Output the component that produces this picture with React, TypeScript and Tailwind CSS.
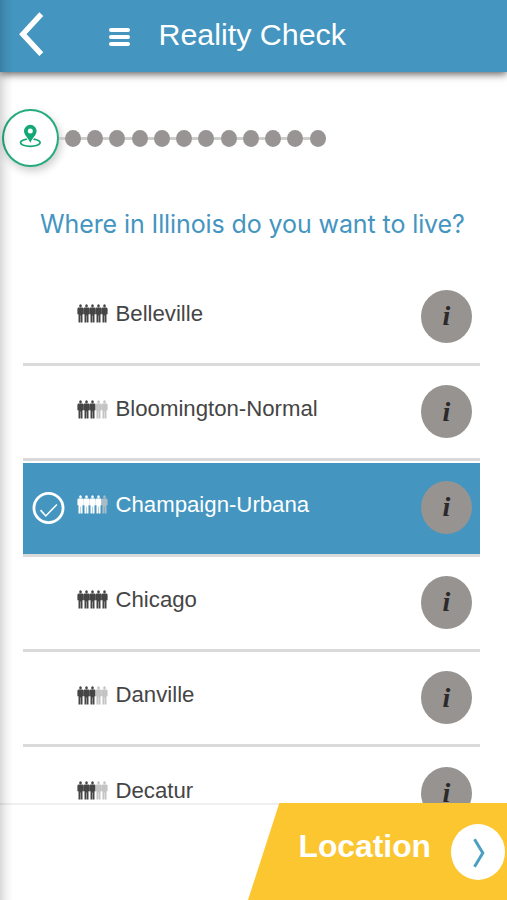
import React from 'react';
import clsx from 'clsx';

interface City {
  name: string;
  population: number;
  selected?: boolean;
}

const cities: City[] = [
  { name: 'Belleville', population: 5 },
  { name: 'Bloomington-Normal', population: 3 },
  { name: 'Champaign-Urbana', population: 4, selected: true },
  { name: 'Chicago', population: 5 },
  { name: 'Danville', population: 3 },
  { name: 'Decatur', population: 3 },
];

const REMAINING_STEPS = 12;

const Person: React.FC<{ className: string }> = ({ className }) => (
  <svg viewBox="0 0 7 19" className={clsx('h-[19px] w-[7px] -mr-[0.9px] shrink-0', className)} fill="currentColor">
    <ellipse cx="3.5" cy="1.8" rx="1.3" ry="1.6" />
    <path d="M1.7 3.6h3.6q1.2 0 1.300 1.300v5.300H5.500V18.500H3.700V11.400H3.300V18.500H1.500V10.200H.4V4.900Q.5 3.600 1.700 3.600z" />
  </svg>
);

const Population: React.FC<{ count: number; selected?: boolean }> = ({ count, selected }) => (
  <div className="-mt-[7px] flex w-[38.5px] shrink-0">
    {[1, 2, 3, 4, 5].map((n) => (
      <Person
        key={n}
        className={
          n <= count ? (selected ? 'text-white' : 'text-[#454545]') : selected ? 'text-[#a9bcc7]' : 'text-[#c4c4c4]'
        }
      />
    ))}
  </div>
);

const Header: React.FC = () => (
  <header className="relative z-10 flex h-[71.5px] shrink-0 items-center bg-[#4495bf] text-white shadow-[0_2px_8px_rgba(0,0,0,0.65)]">
    <button className="ml-[19px] mt-[-3px]">
      <svg viewBox="0 0 26 44" className="h-11 w-[26px]" fill="none" stroke="currentColor" strokeWidth="5.4">
        <path d="M22.3 2.2L3.8 22.2L22.3 42.2" />
      </svg>
    </button>
    <button className="ml-16 mt-[2px] flex w-[21px] flex-col gap-[3.4px]">
      <span className="h-[3.6px] rounded-full bg-white" />
      <span className="h-[3.6px] rounded-full bg-white" />
      <span className="h-[3.6px] rounded-full bg-white" />
    </button>
    <h1 className="ml-[28.5px] mt-[-3px] text-[30.4px] leading-none">Reality Check</h1>
  </header>
);

const Progress: React.FC = () => (
  <div className="mt-[37.5px] flex h-[58px] items-center pl-[2px]">
    <div className="flex h-[58px] w-[56.5px] shrink-0 items-center justify-center rounded-[50%] border-2 border-[#25ab7c] bg-white shadow-[2px_4px_8px_rgba(0,0,0,0.2)]">
      <svg viewBox="0 0 24 24" className="-mt-[5px] h-6 w-6 text-[#14a874]" fill="none">
        <ellipse cx="12.3" cy="18.6" rx="9.8" ry="3.7" stroke="currentColor" strokeWidth="1.7" />
        <path d="M12.3 18L7.3 11H17.3z" fill="#fff" stroke="#fff" strokeWidth="2" />
        <path
          d="M12.3 .8a6.3 6.3 0 0 0-6.3 6.3c0 4.300 4.700 7.200 6.300 12 1.600-4.800 6.300-7.700 6.300-12a6.300 6.300 0 0 0-6.300-6.300z"
          fill="currentColor"
        />
        <circle cx="12.3" cy="7" r="2.5" fill="#fff" />
      </svg>
    </div>
    {Array.from({ length: REMAINING_STEPS }, (_, i) => (
      <React.Fragment key={i}>
        <span className="mt-px h-[2.5px] w-[6.27px] shrink-0 bg-[#cfcdcc]" />
        <span className="mt-px h-[16.5px] w-4 shrink-0 rounded-[50%] bg-[#979493]" />
      </React.Fragment>
    ))}
  </div>
);

const CityRow: React.FC<{ city: City }> = ({ city }) => (
  <li className="h-[95.35px] shrink-0 border-b-[3px] border-[#dbdada] pt-[1.5px]">
    <div
      className={clsx('flex h-full items-center', city.selected ? 'bg-[#4495bf] text-white' : 'text-[#454545]')}
    >
      <div className="w-[54px] shrink-0 pl-[9px]">
        {city.selected && (
          <svg viewBox="0 0 34 34" className="h-[34px] w-[33px]" fill="none" stroke="currentColor">
            <circle cx="17" cy="17" r="15" strokeWidth="2.9" />
            <path d="M8.8 19.2L14.2 25.2L25.600 13.400" strokeWidth="1.6" />
          </svg>
        )}
      </div>
      <Population count={city.population} selected={city.selected} />
      <span className="-mt-[7px] flex-1 text-[22.2px] leading-none">{city.name}</span>
      <button className="mr-2 -mt-[2px] flex h-[53px] w-[51px] items-center justify-center rounded-[50%] bg-[#979391] font-['Liberation_Serif',serif] text-[28px] font-bold italic leading-none text-[#2b2929]">
        i
      </button>
    </div>
  </li>
);

const Footer: React.FC = () => (
  <footer className="z-10 flex h-[97.500px] shrink-0 justify-end border-t-2 border-[#efefef] bg-white">
    <div className="-mt-[2px] flex h-[97.500px] w-[259px] items-center bg-[#fbc62f] pl-[50.500px] text-white [clip-path:polygon(31.500px_0,100%_0,100%_100%,0_100%)]">
      <span className="-mt-[9px] w-[152.500px] text-[31.8px] font-bold leading-none">Location</span>
      <button className="mt-[2px] flex h-14 w-[54px] shrink-0 items-center justify-center rounded-[50%] bg-white">
        <svg viewBox="0 0 12 30" className="ml-[2px] mt-px h-[30px] w-3" fill="none" stroke="#4a9fc2" strokeWidth="3">
          <path d="M1.500 1.200L9.800 15L1.500 28.800" />
        </svg>
      </button>
    </div>
  </footer>
);

export default function App() {
  return (
    <div className="relative flex h-[900px] w-[507px] flex-col overflow-hidden bg-white font-['Liberation_Sans',Arial,sans-serif]">
      <Header />
      <main className="flex min-h-0 flex-1 flex-col overflow-hidden">
        <Progress />
        <h2 className="mt-[41px] h-[62.500px] shrink-0 whitespace-nowrap pl-10 font-['Inter',sans-serif] text-[25px] leading-[32px] tracking-[-0.1px] text-[#4495bf]">
          Where in Illinois do you want to live?
        </h2>
        <ul className="ml-[23px] flex w-[457px] flex-col">
          {cities.map((city) => (
            <CityRow key={city.name} city={city} />
          ))}
        </ul>
      </main>
      <Footer />
      <div className="pointer-events-none absolute inset-y-0 left-0 z-20 w-[13px] bg-linear-to-r from-black/15 via-black/5 to-transparent" />
    </div>
  );
}
